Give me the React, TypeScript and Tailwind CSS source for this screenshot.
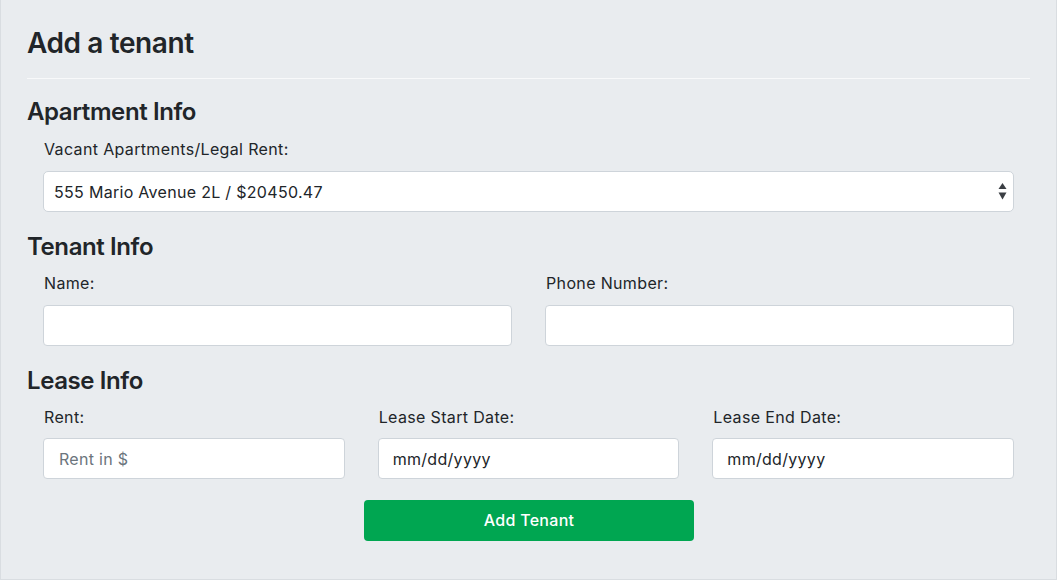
import React from "react";

const font = { fontFamily: "Inter, 'Noto Sans', sans-serif" };

function Label({ children }: { children: React.ReactNode }) {
  return (
    <label className="block pl-px text-[16px] leading-[24px] tracking-[0.35px] text-[#212529]">
      {children}
    </label>
  );
}

function TextInput({
  placeholder,
  value,
  top = "mt-[10px]",
}: {
  placeholder?: string;
  value?: string;
  top?: string;
}) {
  return (
    <div
      className={`${top} flex h-[41px] items-center rounded-[4px] border border-[#ced4da] bg-white px-[14px] text-[16px] tracking-[0.3px]`}
    >
      {value ? (
        <span className="text-[#212529]">{value}</span>
      ) : (
        <span className="pl-px text-[#6c757d]">{placeholder}</span>
      )}
    </div>
  );
}

function SelectArrows() {
  return (
    <svg width="9" height="17" viewBox="0 0 9 17" className="text-[#3b3f44]">
      <path d="M4.5 0 L8.5 6 L0.5 6 Z" fill="currentColor" />
      <path d="M4.5 16.5 L8.5 9.5 L0.5 9.5 Z" fill="currentColor" />
    </svg>
  );
}

export default function App() {
  return (
    <div className="min-h-screen bg-white" style={font}>
      <div className="h-[580px] border-x border-b border-[#d9dde1] bg-[#e9ecef] px-[26px] pt-[26px]">
        <h3 className="text-[28px] font-semibold leading-[34px] tracking-[-0.4px] text-[#212529]">
          Add a tenant
        </h3>
        <div className="mt-[18px] h-px bg-[#f8f9fa]" />

        <h4 className="mt-[18px] text-[24px] font-semibold leading-[29px] tracking-[-0.4px] text-[#212529]">
          Apartment Info
        </h4>
        <div className="mt-[11px] px-[16px]">
          <Label>Vacant Apartments/Legal Rent:</Label>
          <div className="mt-[10px] flex h-[41px] items-center justify-between rounded-[5px] border border-[#ced4da] bg-white pl-[10px] pr-[6px] text-[16px] tracking-[0.3px] text-[#212529]">
            <span>555 Mario Avenue 2L / $20450.47</span>
            <SelectArrows />
          </div>
        </div>

        <h4 className="mt-[20px] text-[24px] font-semibold leading-[29px] tracking-[-0.4px] text-[#212529]">
          Tenant Info
        </h4>
        <div className="mt-[10px] grid grid-cols-2 gap-x-[33px] px-[16px]">
          <div>
            <Label>Name:</Label>
            <TextInput />
          </div>
          <div>
            <Label>Phone Number:</Label>
            <TextInput />
          </div>
        </div>

        <h4 className="mt-[20px] text-[24px] font-semibold leading-[29px] tracking-[-0.4px] text-[#212529]">
          Lease Info
        </h4>
        <div className="mt-[10px] grid grid-cols-3 gap-x-[33px] px-[16px]">
          <div>
            <Label>Rent:</Label>
            <TextInput placeholder="Rent in $" top="mt-[9px]" />
          </div>
          <div>
            <Label>Lease Start Date:</Label>
            <TextInput value="mm/dd/yyyy" top="mt-[9px]" />
          </div>
          <div>
            <Label>Lease End Date:</Label>
            <TextInput value="mm/dd/yyyy" top="mt-[9px]" />
          </div>
        </div>

        <div className="mt-[21px] flex justify-center pl-[1px]">
          <button className="h-[41px] w-[330px] rounded-[4px] bg-[#00a651] pb-px text-[16px] font-medium tracking-[0.3px] text-white">
            Add Tenant
          </button>
        </div>
      </div>
    </div>
  );
}
